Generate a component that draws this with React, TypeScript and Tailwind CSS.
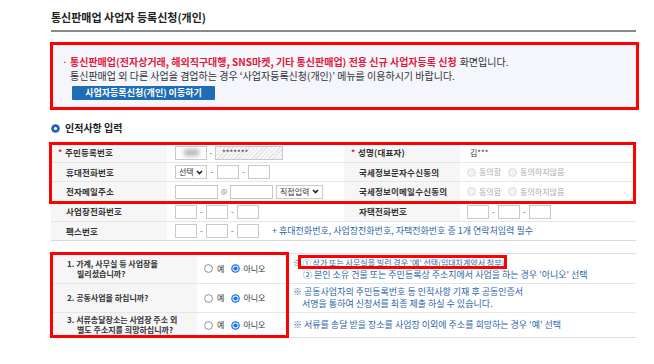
import React from 'react';

const Chevron = () => (
  <svg width="7" height="5" viewBox="0 0 7 5" className="shrink-0">
    <path d="M1 1 L3.5 3.6 L6 1" fill="none" stroke="#222" strokeWidth="1.6" />
  </svg>
);

const Box = ({ className = '', children }: { className?: string; children?: React.ReactNode }) => (
  <div className={`h-[14px] border border-[#c9c9c9] bg-white flex items-center ${className}`}>{children}</div>
);

const Dash = ({ className = 'w-[9px]' }: { className?: string }) => (
  <span className={`text-center text-[8px] text-[#555] ${className}`}>-</span>
);

const Select = ({ className = '', label }: { className?: string; label: string }) => (
  <div className={`flex h-[14px] items-center justify-between border border-[#c9c9c9] bg-white pl-[3px] pr-[3px] text-[8px] text-[#333] ${className}`}>
    <span>{label}</span>
    <Chevron />
  </div>
);

const Radio = ({ checked = false, disabled = false }: { checked?: boolean; disabled?: boolean }) => (
  <svg width="9" height="9" viewBox="0 0 9 9" className="shrink-0">
    {checked ? (
      <>
        <circle cx="4.5" cy="4.5" r="4.3" fill="#1a73e8" />
        <circle cx="4.5" cy="4.5" r="3" fill="#fff" />
        <circle cx="4.5" cy="4.5" r="2.1" fill="#1a73e8" />
      </>
    ) : (
      <circle cx="4.5" cy="4.5" r="3.9" fill={disabled ? '#f3f3f3' : '#fff'} stroke={disabled ? '#d2d2d2' : '#767676'} strokeWidth="0.8" />
    )}
  </svg>
);

const Label = ({ star = false, children }: { star?: boolean; children: React.ReactNode }) => (
  <div className={`flex items-center bg-[#f6f6f6] text-[8.5px] tracking-[0.2px] font-bold text-[#333] ${star ? 'pl-[7px]' : 'pl-[15px]'}`}>
    {star && <span className="w-[7px] text-[#e2183a]">*</span>}
    {children}
  </div>
);

const Phone3 = () => (
  <div className="flex items-center">
    <Box className="w-[22px]" />
    <Dash />
    <Box className="w-[22px]" />
    <Dash />
    <Box className="w-[22px]" />
  </div>
);

const Consent = () => (
  <div className="flex items-center pl-[7px] text-[8px] text-[#aaaaaa]">
    <Radio disabled />
    <span className="ml-[3px]">동의함</span>
    <span className="ml-[7px]"><Radio disabled /></span>
    <span className="ml-[3px]">동의하지않음</span>
  </div>
);

const YesNo = () => (
  <div className="flex items-center pl-[7px] text-[8px] text-[#333]">
    <Radio />
    <span className="ml-[4px]">예</span>
    <span className="ml-[7px]"><Radio checked /></span>
    <span className="ml-[3px]">아니오</span>
  </div>
);

export default function App() {
  return (
    <div className="w-[654px] h-[364px] overflow-hidden bg-white pl-[51px] font-['Noto_Sans_CJK_KR','Noto_Sans',sans-serif]">
      <div className="w-[585px]">
        {/* title */}
        <div className="pt-[11px] pb-[7px] border-b-2 border-[#8a8a8a] text-[11px] leading-[12px] font-bold text-[#222]">
          통신판매업 사업자 등록신청(개인)
        </div>

        {/* notice */}
        <div className="mt-[10px] ml-[-1px] w-[589px] border-[3px] border-[#ff0000] bg-[#f4f6fb] pl-[9px] pt-[10px] pb-[7px] text-[10px] leading-[14px] text-[#333]">
          <div className="flex h-[14px] items-center">
            <span className="w-[8px] text-[#e2183a]">·</span>
            <span className="font-bold text-[#e2183a]">통신판매업(전자상거래, 해외직구대행, SNS마켓, 기타 통신판매업) 전용 신규 사업자등록 신청</span>
            <span className="ml-[3px]">화면입니다.</span>
          </div>
          <div className="flex h-[14px] items-center pl-[8px]">통신판매업 외 다른 사업을 겸업하는 경우 ‘사업자등록신청(개인)’ 메뉴를 이용하시기 바랍니다.</div>
          <button className="mt-[3px] ml-[10px] block h-[14px] w-[143px] rounded-[1px] bg-[#1f6db4] text-[9px] font-bold leading-[14px] text-white">
            사업자등록신청(개인) 이동하기
          </button>
        </div>

        {/* section heading */}
        <div className="mt-[12px] flex items-center text-[10px] leading-[12px] font-bold text-[#222]">
          <svg width="9" height="9" viewBox="0 0 9 9" className="mr-[5px]">
            <circle cx="4.5" cy="4.5" r="4.3" fill="#2462ad" />
            <circle cx="4.5" cy="4.5" r="1.6" fill="#fff" />
          </svg>
          인적사항 입력
        </div>

        {/* personal info table */}
        <div className="relative mt-[8px] border-t border-[#d0d0d0] text-[8px]">
          <div className="grid h-[20px] grid-cols-[116px_177px_116px_176px] border-b border-[#e6e6e6]">
            <Label star>주민등록번호</Label>
            <div className="flex items-center pl-[8px]">
              <Box className="w-[32px] bg-[#efefef]">
                <div className="ml-[8px] h-[7px] w-[15px] bg-[#b9b9b9] blur-[2px]" />
              </Box>
              <Dash className="w-[8px]" />
              <Box className="w-[68px] bg-[repeating-linear-gradient(135deg,#e4e4e4_0px,#e4e4e4_1px,#f7f7f7_1px,#f7f7f7_3px)] pl-[6px] text-[8px] text-[#333]">
                *******
              </Box>
            </div>
            <Label star>성명(대표자)</Label>
            <div className="flex items-center pl-[10px] text-[8px] text-[#333]">김***</div>
          </div>

          <div className="grid h-[19px] grid-cols-[116px_177px_116px_176px] border-b border-[#e6e6e6]">
            <Label>휴대전화번호</Label>
            <div className="flex items-center pl-[8px]">
              <Select className="w-[32px]" label="선택" />
              <Dash className="w-[10px]" />
              <Box className="w-[22px]" />
              <Dash />
              <Box className="w-[22px]" />
            </div>
            <Label>국세정보문자수신동의</Label>
            <Consent />
          </div>

          <div className="grid h-[20px] grid-cols-[116px_177px_116px_176px] border-b border-[#e6e6e6]">
            <Label>전자메일주소</Label>
            <div className="flex items-center pl-[8px]">
              <Box className="w-[43px]" />
              <span className="w-[12px] text-center text-[7px] text-[#888]">@</span>
              <Box className="w-[43px]" />
              <Select className="ml-[3px] w-[47px]" label="직접입력" />
            </div>
            <Label>국세정보이메일수신동의</Label>
            <Consent />
          </div>

          <div className="grid h-[20px] grid-cols-[116px_177px_116px_176px] border-b border-[#e6e6e6]">
            <Label>사업장전화번호</Label>
            <div className="flex items-center pl-[8px]">
              <Phone3 />
            </div>
            <Label>자택전화번호</Label>
            <div className="flex items-center pl-[7px]">
              <Phone3 />
            </div>
          </div>

          <div className="grid h-[19px] grid-cols-[116px_469px] border-b border-[#d8d8d8]">
            <Label>팩스번호</Label>
            <div className="flex items-center pl-[8px]">
              <Phone3 />
              <span className="ml-[13px] text-[9px] text-[#2e65a8]">+ 휴대전화번호, 사업장전화번호, 자택전화번호 중 1개 연락처입력 필수</span>
            </div>
          </div>

          <div className="pointer-events-none absolute left-[-2px] top-[-1px] h-[62px] w-[587px] border-[3px] border-[#ff0000]" />
        </div>

        {/* questions table */}
        <div className="relative mt-[12px] border-t border-[#e0e0e0] text-[8px]">
          <div className="grid h-[30px] grid-cols-[146px_92px_347px] border-b border-[#e6e6e6]">
            <div className="flex flex-col justify-center bg-[#f6f6f6] pl-[16px] font-bold leading-[10px] text-[#333]">
              <span>1. 가계, 사무실 등 사업장을</span>
              <span className="pl-[10px]">빌리셨습니까?</span>
            </div>
            <YesNo />
            <div className="flex flex-col justify-center pl-[4px] leading-[12px] text-[#2e65a8]">
              <div className="text-[8px]">
                ※{' '}
                <span className="relative">
                  ① 상가 또는 사무실을 빌린 경우 '예' 선택(임대차계약서 첨부)
                  <span className="pointer-events-none absolute -left-[5px] -right-[3px] -top-[2px] -bottom-[1px] border-[3px] border-[#ff0000]" />
                </span>
              </div>
              <div className="pl-[10px] text-[9px]">② 본인 소유 건물 또는 주민등록상 주소지에서 사업을 하는 경우 '아니오' 선택</div>
            </div>
          </div>

          <div className="grid h-[29px] grid-cols-[146px_92px_347px] border-b border-[#e6e6e6]">
            <div className="flex items-center bg-[#f6f6f6] pl-[16px] font-bold text-[#333]">2. 공동사업을 하십니까?</div>
            <YesNo />
            <div className="flex flex-col justify-center pl-[4px] text-[9px] leading-[12px] text-[#2e65a8]">
              <div>※ 공동사업자의 주민등록번호 등 인적사항 기재 후 공동인증서</div>
              <div className="pl-[9px]">서명을 통하여 신청서를 최종 제출 하실 수 있습니다.</div>
            </div>
          </div>

          <div className="grid h-[25px] grid-cols-[146px_92px_347px] border-b border-[#e0e0e0]">
            <div className="flex flex-col justify-center bg-[#f6f6f6] pl-[16px] font-bold leading-[10px] text-[#333]">
              <span>3. 서류송달장소는 사업장 주소 외</span>
              <span className="pl-[10px]">별도 주소지를 희망하십니까?</span>
            </div>
            <YesNo />
            <div className="flex items-center pl-[4px] text-[9px] text-[#2e65a8]">
              ※ 서류를 송달 받을 장소를 사업장 이외에 주소를 희망하는 경우 '예' 선택
            </div>
          </div>

          <div className="pointer-events-none absolute left-[-1px] top-[-2px] h-[86px] w-[239px] border-[3px] border-[#ff0000]" />
        </div>
      </div>
    </div>
  );
}
